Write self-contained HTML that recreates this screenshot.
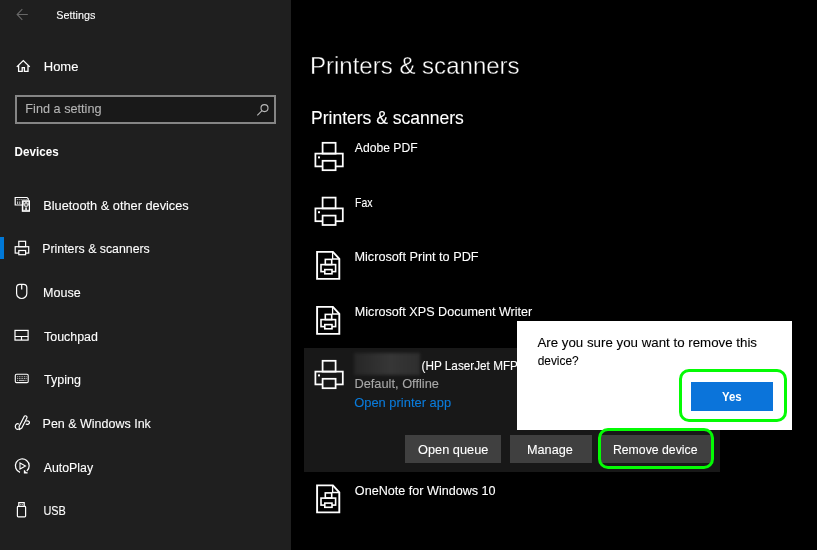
<!DOCTYPE html>
<html lang="en">
<head>
<meta charset="utf-8">
<title>Settings</title>
<style>
html,body{margin:0;padding:0;background:#000;}
body{width:817px;height:550px;position:relative;overflow:hidden;font-family:"Liberation Sans",sans-serif;}
.abs{position:absolute;}
.t{-webkit-text-stroke:0.1px currentColor;position:absolute;left:0;top:0;white-space:pre;transform-origin:0 0;line-height:normal;}
svg{position:absolute;overflow:visible;}
.side{left:0;top:0;width:291px;height:550px;background:#1f1f1f;}
.search{left:15px;top:95px;width:257px;height:25px;border:2px solid #858585;background:#191919;}
.sel{left:0;top:237px;width:3.6px;height:22px;background:#0078d7;}
.panel{left:304px;top:348px;width:416px;height:124px;background:#181818;}
.btn{top:434.6px;height:28.4px;background:#404040;}
.dlg{left:517px;top:321.2px;width:274.8px;height:108.4px;background:#fff;}
.yes{left:690.5px;top:382px;width:82px;height:29px;background:#0b74da;}
.green{border:3px solid #04fb04;border-radius:10px;box-sizing:border-box;}
.redact{left:353.5px;top:353px;width:66px;height:21.5px;background:linear-gradient(90deg,#262626,#363636 55%,#2e2e2e);filter:blur(1.8px);}
</style>
</head>
<body>
<div class="abs side"></div>
<div class="abs search"></div>
<div class="abs sel"></div>
<div class="abs panel"></div>
<div class="abs redact"></div>
<div class="abs btn" style="left:405.2px;width:95.5px"></div>
<div class="abs btn" style="left:509.5px;width:82px"></div>
<div class="abs btn" style="left:600.7px;width:110.8px"></div>
<div class="abs dlg"></div>
<div class="abs yes"></div>
<div class="abs green" style="left:679px;top:368.8px;width:108px;height:53px"></div>
<div class="abs green" style="left:598px;top:428.2px;width:116.2px;height:41.2px"></div>
<svg width="817" height="550" viewBox="0 0 817 550" style="left:0;top:0">
<g transform="translate(0,0)" fill="none" stroke="#fff" stroke-width="1.75">
<rect x="322.6" y="142.8" width="13" height="10.8"/>
<rect x="315.4" y="153.6" width="27.4" height="12.8"/>
<rect x="322.6" y="160.8" width="13" height="9.4" fill="#000"/>
<rect x="318" y="156.4" width="2" height="2" fill="#fff" stroke="none"/>
</g>
<g transform="translate(0,54.8)" fill="none" stroke="#fff" stroke-width="1.75">
<rect x="322.6" y="142.8" width="13" height="10.8"/>
<rect x="315.4" y="153.6" width="27.4" height="12.8"/>
<rect x="322.6" y="160.8" width="13" height="9.4" fill="#000"/>
<rect x="318" y="156.4" width="2" height="2" fill="#fff" stroke="none"/>
</g>
<g transform="translate(0,218)" fill="none" stroke="#fff" stroke-width="1.75">
<rect x="322.6" y="142.8" width="13" height="10.8"/>
<rect x="315.4" y="153.6" width="27.4" height="12.8"/>
<rect x="322.6" y="160.8" width="13" height="9.4" fill="#181818"/>
<rect x="318" y="156.4" width="2" height="2" fill="#fff" stroke="none"/>
</g>
<g transform="translate(0,0)" fill="none" stroke="#fff" stroke-width="1.9">
<path d="M317.1 251.9 H332.9 L339.3 258.8 V278.9 H317.1 Z"/>
<path d="M332.6 251.9 V259 H339.3" stroke-width="1.3"/>
<g stroke-width="1.6">
<rect x="325.3" y="259.4" width="6.4" height="5.2"/>
<rect x="321" y="264.6" width="14.6" height="7"/>
<rect x="324.8" y="269.6" width="7.2" height="4.2" fill="#000"/>
</g>
</g>
<g transform="translate(0,55)" fill="none" stroke="#fff" stroke-width="1.9">
<path d="M317.1 251.9 H332.9 L339.3 258.8 V278.9 H317.1 Z"/>
<path d="M332.6 251.9 V259 H339.3" stroke-width="1.3"/>
<g stroke-width="1.6">
<rect x="325.3" y="259.4" width="6.4" height="5.2"/>
<rect x="321" y="264.6" width="14.6" height="7"/>
<rect x="324.8" y="269.6" width="7.2" height="4.2" fill="#000"/>
</g>
</g>
<g transform="translate(0,233.5)" fill="none" stroke="#fff" stroke-width="1.9">
<path d="M317.1 251.9 H332.9 L339.3 258.8 V278.9 H317.1 Z"/>
<path d="M332.6 251.9 V259 H339.3" stroke-width="1.3"/>
<g stroke-width="1.6">
<rect x="325.3" y="259.4" width="6.4" height="5.2"/>
<rect x="321" y="264.6" width="14.6" height="7"/>
<rect x="324.8" y="269.6" width="7.2" height="4.2" fill="#000"/>
</g>
</g>
<path d="M27.8 14.5 H17.4 M22.3 9.2 L17.1 14.5 L22.3 19.8" fill="none" stroke="#676767" stroke-width="1.1"/>
<path d="M16.8 66.9 L23.3 60.6 L29.8 66.9 M18.6 65.4 V71.4 H22.2 V67.6 H24.4 V71.4 H28 V65.4" fill="none" stroke="#fff" stroke-width="1.3"/>
<g fill="none" stroke="#b8b8b8" stroke-width="1.1"><circle cx="264.5" cy="108.1" r="3.5"/><path d="M262 110.7 L257.3 115.3"/></g>
<g fill="none" stroke="#fff" stroke-width="1.2">
<path d="M22 205 H15.2 V197.5 H27 L28.2 198.7 V200.4"/>
<path d="M16.8 199.6 H27 " stroke-dasharray="1.1 0.8" stroke-width="1" stroke="#bbb"/>
<path d="M17.6 201.4 V204 M19.8 201.4 V204" stroke-width="1" stroke="#ccc"/>
<rect x="22.4" y="200.9" width="7" height="10.3" fill="#c8c8c8"/>
<g stroke="none" fill="#262626">
<circle cx="24.4" cy="202.7" r="0.6"/><circle cx="27.8" cy="202.7" r="0.6"/>
<path d="M23.4 205.2 L25.6 207.6 V209.8 H23.4 Z M28.8 205.2 L26.6 207.6 V209.8 H28.8 Z"/>
<path d="M26.1 203.4 L27.3 204.8 L26.1 206.2 L24.9 204.8 Z" fill="#555"/>
</g>
<rect x="25.2" y="208.2" width="1.8" height="1.6" fill="#eee" stroke="none"/>
</g>
<g fill="none" stroke="#fff" stroke-width="1.2">
<rect x="18.8" y="241.3" width="6.8" height="5.4"/>
<rect x="15.2" y="246.7" width="13.5" height="6.4"/>
<rect x="18.8" y="250.5" width="6.8" height="4.2" fill="#1f1f1f"/>
</g>
<g fill="none" stroke="#fff" stroke-width="1.2">
<path d="M16.6 287.5 A3.2 3.2 0 0 1 19.8 284.3 H23.6 A3.2 3.2 0 0 1 26.8 287.5 V293.4 A5.1 5.1 0 0 1 16.6 293.4 Z"/>
<path d="M21.7 284.3 V289.4"/>
</g>
<g fill="none" stroke="#fff" stroke-width="1.2">
<rect x="15" y="330.4" width="13.1" height="9.7"/>
<path d="M15 336.5 H28.1 M21.5 336.5 V340.1"/>
</g>
<g fill="none" stroke="#fff" stroke-width="1.1">
<rect x="15.3" y="374.2" width="12.9" height="8.4" rx="1.2"/>
<path d="M17.2 376.7 H26.6 M17.2 378.5 H26.6" stroke-dasharray="0.9 0.8" stroke-width="0.9" stroke="#ddd"/>
<path d="M17.2 380.4 H18.1 M19 380.4 H24.6 M25.4 380.4 H26.4" stroke-width="0.9" stroke="#ddd"/>
</g>
<g fill="none" stroke="#fff" stroke-width="1.2" stroke-linecap="round" stroke-linejoin="round">
<path d="M19.1 426.6 L24.2 416.4 A1.6 1.6 0 0 1 27 417.8 L21.8 428 L19.4 429.6 Z"/>
<path d="M18.7 424 C16.8 423.1 15.3 424.6 15.3 426.6 C15.3 428.7 16.9 429.7 18.4 429.1"/>
<path d="M26.6 421 C28.4 420.3 29.6 421.5 29.4 422.8 C29.2 424.1 27.8 424.6 26.2 424.1"/>
</g>
<g fill="none" stroke="#fff" stroke-width="1.25" stroke-linejoin="miter">
<path d="M20 472.3 A6.9 6.9 0 1 1 26.8 471"/>
<path d="M24.5 470.2 V472.9 H27.6" stroke-width="1.3"/><path d="M24.5 470.6 V472.9 H27 Z" fill="#fff" stroke="none"/>
<path d="M20 462.9 L25.5 466 L20 469.1 Z" stroke-width="1.1"/>
</g>
<g fill="none" stroke="#fff" stroke-width="1.2">
<rect x="17.4" y="506.4" width="8.2" height="10.4" rx="0.8"/>
<path d="M18.8 506.4 V502.6 H24.2 V506.4"/>
<path d="M20.4 504.6 H21.2 M21.9 504.6 H22.7" stroke-width="1"/>
</g>
</svg>
<div id="txt" style="position:absolute;left:0;top:0;width:817px;height:550px;will-change:transform">
<div class="t" style="font-size:11.2px;color:#fff;font-weight:400;transform:translate(56.34px,9px) scaleX(0.9647)">Settings</div>
<div class="t" style="font-size:12.3px;color:#fff;font-weight:400;transform:translate(43.76px,60px) scaleX(1.0568)">Home</div>
<div class="t" style="font-size:12.2px;color:#b4b4b4;font-weight:400;transform:translate(25.36px,102px) scaleX(1.0408)">Find a setting</div>
<div class="t" style="-webkit-text-stroke:0;font-size:12.2px;color:#fff;font-weight:700;transform:translate(14.60px,145px) scaleX(0.9553)">Devices</div>
<div class="t" style="font-size:12.3px;color:#fff;font-weight:400;transform:translate(43.26px,199px) scaleX(1.0379)">Bluetooth &amp; other devices</div>
<div class="t" style="font-size:12.3px;color:#fff;font-weight:400;transform:translate(42.27px,242px) scaleX(1.0019)">Printers &amp; scanners</div>
<div class="t" style="font-size:12.3px;color:#fff;font-weight:400;transform:translate(43.08px,286px) scaleX(1.0184)">Mouse</div>
<div class="t" style="font-size:12.3px;color:#fff;font-weight:400;transform:translate(44.04px,330px) scaleX(1.0092)">Touchpad</div>
<div class="t" style="font-size:12.3px;color:#fff;font-weight:400;transform:translate(44.04px,373px) scaleX(1.0166)">Typing</div>
<div class="t" style="font-size:12.3px;color:#fff;font-weight:400;transform:translate(42.59px,417px) scaleX(1.0151)">Pen &amp; Windows Ink</div>
<div class="t" style="font-size:12.3px;color:#fff;font-weight:400;transform:translate(43.69px,461px) scaleX(1.0046)">AutoPlay</div>
<div class="t" style="font-size:12.3px;color:#fff;font-weight:400;transform:translate(43.40px,504px) scaleX(0.8858)">USB</div>
<div class="t" style="-webkit-text-stroke:0.35px #000;font-size:24.6px;color:#fff;font-weight:400;transform:translate(309.91px,52px) scaleX(0.9773)">Printers &amp; scanners</div>
<div class="t" style="-webkit-text-stroke:0.1px currentColor;font-size:17.9px;color:#fff;font-weight:400;transform:translate(311.06px,108px) scaleX(0.9782)">Printers &amp; scanners</div>
<div class="t" style="font-size:12.7px;color:#fff;font-weight:400;transform:translate(354.87px,141px) scaleX(0.9572)">Adobe PDF</div>
<div class="t" style="font-size:12.7px;color:#fff;font-weight:400;transform:translate(354.98px,196px) scaleX(0.8267)">Fax</div>
<div class="t" style="font-size:12.7px;color:#fff;font-weight:400;transform:translate(354.43px,250px) scaleX(1.0003)">Microsoft Print to PDF</div>
<div class="t" style="font-size:12.7px;color:#fff;font-weight:400;transform:translate(354.81px,305px) scaleX(0.9920)">Microsoft XPS Document Writer</div>
<div class="t" style="font-size:13.1px;color:#fff;font-weight:400;transform:translate(421.53px,358px) scaleX(0.8972)">(HP LaserJet MFP</div>
<div class="t" style="font-size:12.7px;color:#a8a8a8;font-weight:400;transform:translate(354.39px,377px) scaleX(1.0105)">Default, Offline</div>
<div class="t" style="font-size:12.7px;color:#0a7cdc;font-weight:400;transform:translate(354.20px,396px) scaleX(1.0173)">Open printer app</div>
<div class="t" style="font-size:12.7px;color:#fff;font-weight:400;transform:translate(417.99px,443px) scaleX(1.0073)">Open queue</div>
<div class="t" style="font-size:12.7px;color:#fff;font-weight:400;transform:translate(527.00px,443px) scaleX(0.9999)">Manage</div>
<div class="t" style="font-size:12.7px;color:#fff;font-weight:400;transform:translate(612.90px,443px) scaleX(0.9680)">Remove device</div>
<div class="t" style="font-size:12.7px;color:#fff;font-weight:400;transform:translate(354.84px,484px) scaleX(0.9932)">OneNote for Windows 10</div>
<div class="t" style="font-size:12.7px;color:#000;font-weight:400;transform:translate(537.40px,336px) scaleX(1.0485)">Are you sure you want to remove this</div>
<div class="t" style="font-size:12.7px;color:#000;font-weight:400;transform:translate(537.64px,354px) scaleX(0.9397)">device?</div>
<div class="t" style="-webkit-text-stroke:0;font-size:12.5px;color:#fff;font-weight:700;transform:translate(722.00px,390px) scaleX(0.9118)">Yes</div>
</div>
</body>
</html>
